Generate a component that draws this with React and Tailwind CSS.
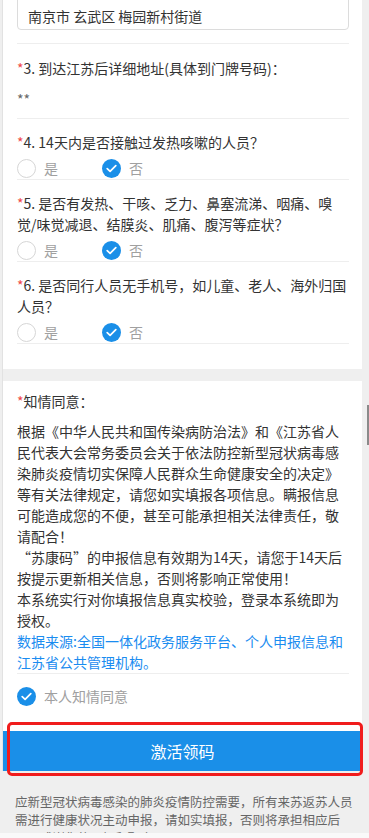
import React from 'react';

const BLUE = '#1a8fe8';

const CheckCircle = ({ checked }) =>
  checked ? (
    <span className="flex h-[19px] w-[19px] shrink-0 items-center justify-center rounded-full bg-[#1a8fe8]">
      <svg width="11" height="9" viewBox="0 0 11 9" fill="none">
        <path d="M1.2 4.6 L4.1 7.3 L9.8 1.6" stroke="#fff" strokeWidth="1.7" strokeLinecap="round" strokeLinejoin="round" />
      </svg>
    </span>
  ) : (
    <span className="h-[19px] w-[19px] shrink-0 rounded-full border border-[#d6d6d6] bg-white" />
  );

const Label = ({ children }) => (
  <div className="text-[14px] leading-[21px] text-[#333]">
    <span className="text-[#f04848]">*</span>
    {children}
  </div>
);

// 是 / 否 radio row, the answer is always 否 here
const YesNo = () => (
  <div className="mt-[5px] flex h-[20px] items-center text-[14px] text-[#a0a0a0]">
    <div className="flex w-[85px] items-center gap-[8px]">
      <CheckCircle checked={false} />
      <span>是</span>
    </div>
    <div className="flex items-center gap-[8px]">
      <CheckCircle checked />
      <span>否</span>
    </div>
  </div>
);

const questions = [
  '4. 14天内是否接触过发热咳嗽的人员？',
  '5. 是否有发热、干咳、乏力、鼻塞流涕、咽痛、嗅觉/味觉减退、结膜炎、肌痛、腹泻等症状？',
  '6. 是否同行人员无手机号，如儿童、老人、海外归国人员？',
];

export default function App() {
  return (
    <div className="relative h-[838px] overflow-hidden bg-[#f9f9f9] font-['Noto_Sans_CJK_SC','Noto_Sans',sans-serif]">
      <div className="h-[833px] overflow-hidden bg-[#efefef]">
        <div className="ml-[2px] w-[360px] border-l border-[#e2e2e2]">
          {/* first card: address + health questions */}
          <section className="bg-white pb-[25px] pl-[14px] pr-[13px]">
            <div className="border-b border-[#eeeeee] pb-[13px]">
              <div className="-mt-[10px] rounded-[4px] border border-[#dcdcdc] px-[10px] pb-[3px] pt-[15px] text-[14px] leading-[20px] text-[#333]">
                南京市 玄武区 梅园新村街道
              </div>
            </div>

            <div className="border-b border-[#eeeeee] pb-[8px] pt-[14px]">
              <Label>3. 到达江苏后详细地址(具体到门牌号码)：</Label>
              <div className="mt-[10px] text-[14px] leading-[21px] text-[#666]">**</div>
            </div>

            {questions.map((q) => (
              <div key={q} className="border-b border-[#eeeeee] pb-[1px] pt-[13px]">
                <Label>{q}</Label>
                <YesNo />
              </div>
            ))}
          </section>

          {/* second card: consent */}
          <section className="mt-[12px] bg-white pb-[25px] pl-[14px] pr-[13px] pt-[10px]">
            <Label>知情同意：</Label>
            <div className="mt-[9px] border-b border-[#eeeeee] text-[14px] leading-[21px] text-[#333]">
              <p>
                根据《中华人民共和国传染病防治法》和《江苏省人民代表大会常务委员会关于依法防控新型冠状病毒感染肺炎疫情切实保障人民群众生命健康安全的决定》等有关法律规定，请您如实填报各项信息。瞒报信息可能造成您的不便，甚至可能承担相关法律责任，敬请配合！
              </p>
              <p>“苏康码”的申报信息有效期为14天，请您于14天后按提示更新相关信息，否则将影响正常使用！</p>
              <p>本系统实行对你填报信息真实校验，登录本系统即为授权。</p>
              <p className="text-[#1a8cf0]">数据来源:全国一体化政务服务平台、个人申报信息和江苏省公共管理机构。</p>
            </div>
            <div className="mt-[12px] flex h-[20px] items-center gap-[8px] text-[14px] text-[#a0a0a0]">
              <CheckCircle checked />
              <span>本人知情同意</span>
            </div>
          </section>

          <button
            className="flex h-[40px] w-full items-center justify-center text-[16px] text-white"
            style={{ backgroundColor: BLUE }}
          >
            激活领码
          </button>
        </div>

        <div className="pl-[15px] pr-[12px] pt-[22px] text-[12.5px] leading-[18px] text-[#666]">
          应新型冠状病毒感染的肺炎疫情防控需要，所有来苏返苏人员需进行健康状况主动申报，请如实填报，否则将承担相应后果，感谢您的理解和配合！
        </div>
      </div>

      {/* red highlight drawn over the button */}
      <div className="pointer-events-none absolute left-[7px] top-[722px] h-[54px] w-[356px] rounded-[5px] border-[3px] border-[#f01c1c]" />
      {/* scrollbar thumb */}
      <div className="absolute right-0 top-[405px] h-[40px] w-[2px] bg-[#8a8a8a]" />
    </div>
  );
}
